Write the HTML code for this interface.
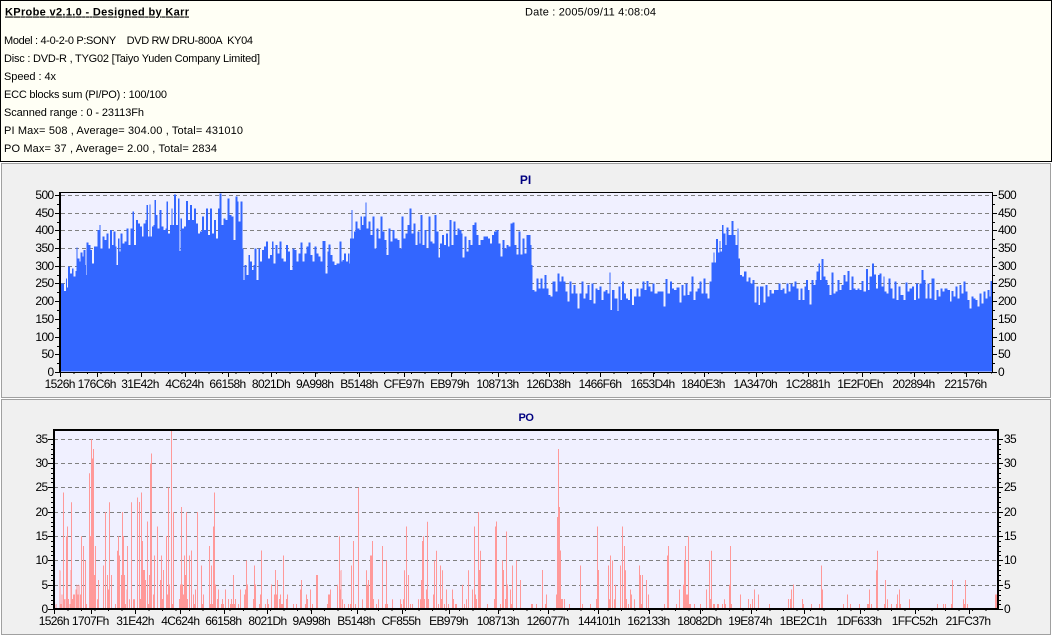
<!DOCTYPE html>
<html><head><meta charset="utf-8"><title>KProbe</title>
<style>
html,body{margin:0;padding:0;background:#fff;width:1052px;height:636px;overflow:hidden}
svg{display:block;font-family:"Liberation Sans",Arial,sans-serif}
text{white-space:pre;fill:#000}
.i{font-size:11px;fill:#000}
.a text{font-size:12px;letter-spacing:-.65px;text-anchor:middle}
.l text{font-size:12px;letter-spacing:-.65px;text-anchor:end}
.r text{font-size:12px;letter-spacing:-.65px;text-anchor:start}
.po path{fill:none;stroke:#ff9999;stroke-width:3}
.pi path{fill:#3366ff;shape-rendering:crispEdges}
.g{stroke:#808080;stroke-width:1;stroke-dasharray:4 3;fill:none;shape-rendering:crispEdges}
.k{stroke:#000;stroke-width:1;fill:none;shape-rendering:crispEdges}
</style></head><body>
<svg xmlns="http://www.w3.org/2000/svg" width="1052" height="636" viewBox="0 0 1052 636">
<defs><filter id="t" x="0" y="0" width="1" height="1" filterUnits="objectBoundingBox" color-interpolation-filters="sRGB"><feComponentTransfer><feFuncA type="discrete" tableValues="0 1"/></feComponentTransfer></filter></defs>
<rect x="0" y="0" width="1052" height="636" fill="#fff"/>
<!-- info -->
<rect x=".5" y=".5" width="1051" height="161" fill="#fffff5" stroke="#000" shape-rendering="crispEdges"/>
<text class="i" x="5" y="15.5" font-weight="bold" text-decoration="underline" textLength="184" lengthAdjust="spacing">KProbe v2.1.0 - Designed by Karr</text>
<text class="i" x="525" y="15.5" textLength="131" lengthAdjust="spacing">Date : 2005/09/11 4:08:04</text>
<text class="i" x="4" y="44" textLength="249" lengthAdjust="spacing">Model : 4-0-2-0 P:SONY    DVD RW DRU-800A  KY04</text>
<text class="i" x="4" y="62" textLength="256" lengthAdjust="spacing">Disc : DVD-R , TYG02 [Taiyo Yuden Company Limited]</text>
<text class="i" x="4" y="80" textLength="52" lengthAdjust="spacing">Speed : 4x</text>
<text class="i" x="4" y="98" textLength="163" lengthAdjust="spacing">ECC blocks sum (PI/PO) : 100/100</text>
<text class="i" x="4" y="116" textLength="140" lengthAdjust="spacing">Scanned range : 0 - 23113Fh</text>
<text class="i" x="4" y="134" textLength="239" lengthAdjust="spacing">PI Max= 508 , Average= 304.00 , Total= 431010</text>
<text class="i" x="4" y="152" textLength="213" lengthAdjust="spacing">PO Max= 37 , Average= 2.00 , Total= 2834</text>

<!-- panels -->
<rect x="1.5" y="163.5" width="1049" height="234" fill="#f0f0f0" stroke="#a0a0a0" shape-rendering="crispEdges"/>
<rect x="1.5" y="399.5" width="1049" height="235" fill="#f0f0f0" stroke="#a0a0a0" shape-rendering="crispEdges"/>

<!-- PI plot -->
<text x="525.5" y="184" font-size="12" font-weight="bold" text-anchor="middle" style="fill:#000080">PI</text>
<rect x="60" y="192" width="932" height="180" fill="#f0f0ff"/>
<path class="g" d="M61 195.5H992M61 213.5H992M61 230.5H992M61 248.5H992M61 266.5H992M61 283.5H992"/>
<g class="pi">
<path transform="translate(0 165) scale(.33333)" d="M183 620V355H192V378H198V340H201V368H204V304H210V325H216V310H220V335H226V318H229V248H232V280H238V290H241V262H247V275H250V255H256V300H258V330H260V232H266V240H272V255H276V295H282V245H288V245H292V195H298V180H302V250H308V215H314V225H320V205H326V250H330V195H336V240H340V200H346V245H350V300H354V220H358V260H362V205H368V235H374V230H380V190H386V240H392V190H398V140H402V240H408V165H414V175H420V185H426V215H430V175H436V165H440V120H444V215H448V118H452V215H456V185H460V180H464V105H468V150H472V190H478V135H484V185H490V195H496V190H500V110H504V205H510V180H514V130H518V180H522V88H528V180H534V100H538V258H542V160H546V190H552V185H558V108H564V165H570V120H576V165H582V130H588V175H594V205H600V200H606V155H612V195H618V130H624V210H630V130H636V205H642V165H648V220H654V130H658V85H664V180H670V160H676V165H682V100H688V150H694V155H700V225H706V95H712V110H716V170H722V110H728V250H730V345H734V300H740V330H745V270H750V290H756V315H760V300H764V250H770V345H775V250H780V290H786V255H792V245H798V230H804V280H810V270H816V230H820V295H826V240H832V265H838V230H844V280H850V290H858V240H864V260H870V315H878V250H884V255H890V290H896V265H902V232H908V290H914V265H920V245H926V232H932V270H938V290H944V245H950V265H956V275H962V290H968V228H976V325H982V260H986V238H992V270H998V290H1004V300H1010V295H1018V230H1024V620Z"/>
<path transform="translate(340 165) scale(.33333)" d="M0 620V290H8V285H12V265H18V290H24V265H28V295H30V220H34V135H38V220H42V200H46V170H52V190H58V195H62V155H66V180H70V155H76V112H80V190H86V170H92V210H98V155H104V250H110V190H116V220H122V155H128V200H134V225H140V270H146V190H152V230H158V195H164V220H172V225H178V250H184V155H190V220H196V205H202V180H208V130H214V205H220V175H226V240H232V200H238V235H242V150H248V240H254V195H260V250H266V155H272V230H278V235H284V150H290V200H296V278H300V235H306V210H312V240H318V205H324V245H328V165H334V240H340V170H346V210H352V190H358V195H364V205H368V278H374V215H380V260H386V225H392V240H398V180H404V172H410V210H416V240H422V225H430V215H438V215H444V220H450V235H456V210H462V200H470V195H476V235H482V275H488V225H494V250H500V240H506V245H512V175H518V172H524V240H530V268H536V200H542V268H548V220H554V265H560V210H566V210H572V240H575V300H578V375H584V380H590V340H596V370H602V340H608V370H614V330H620V370H626V390H632V395H638V350H646V380H652V325H658V350H664V335H670V350H676V380H682V410H688V350H694V385H700V360H706V385H712V430H718V385H724V350H730V400H736V385H742V360H748V405H754V355H760V415H766V370H772V375H778V365H784V405H790V380H796V375H802V385H808V620Z"/>
<path transform="translate(600 165) scale(.33333)" d="M28 620V322H32V435H36V375H44V400H52V438H56V365H62V405H66V350H72V385H78V400H84V405H90V372H96V420H102V395H110V370H116V395H122V370H128V350H134V375H140V348H146V365H152V380H158V355H164V385H172V380H180V380H190V425H196V342H202V385H210V350H216V370H222V375H230V368H238V412H244V360H250V392H256V355H262V390H268V380H274V335H280V405H286V380H292V370H298V350H304V385H310V340H316V385H322V400H328V350H334V292H340V262H344V292H348V222H354V262H358V228H362V260H366V180H370V205H376V240H380V187H386V210H394V168H400V210H406V240H412V190H416V280H420V330H426V335H432V320H440V350H446V338H452V355H458V345H464V412H470V365H476V420H480V365H486V365H490V412H496V360H502V395H508V375H514V385H522V375H530V375H536V355H542V375H548V370H554V385H560V355H566V380H572V355H578V365H584V350H590V370H596V405H602V370H608V405H614V365H618V345H624V375H628V418H634V345H640V360H646V345H650V320H656V295H660V345H664V282H670V335H676V345H682V360H688V390H694V322H700V385H706V380H712V345H718V375H724V360H730V330H736V350H742V318H748V375H754V335H760V370H766V375H772V370H778V375H784V348H790V380H798V312H804V375H808V620Z"/>
<path transform="translate(850 165) scale(.33333)" d="M58 620V335H66V295H72V328H78V370H84V330H88V325H94V365H100V335H104V380H110V385H116V340H122V370H128V400H134V350H140V405H146V365H152V390H160V405H166V352H172V380H178V370H186V365H192V405H198V355H204V400H208V355H214V315H220V345H226V400H232V355H238V400H244V340H250V340H254V405H260V375H266V395H272V370H278V380H284V370H292V375H300V410H304V378H310V395H316V365H322V400H328V360H334V385H340V350H346V380H352V405H358V430H364V395H370V400H376V405H382V425H388V385H394V415H400V380H406V400H412V375H418V395H422V348H427V620Z"/>
</g>
<path d="M60.5 192.5H992.5M59.5 192V373M60.5 192V373M992.5 192V373M60 372.5H993" class="k"/>
<!-- PI ticks -->
<path class="k" d="M60.5 373V377M97.5 373V377M141.5 373V377M185.5 373V377M228.5 373V377M271.5 373V377M315.5 373V377M359.5 373V377M404.5 373V377M451.5 373V377M498.5 373V377M549.5 373V377M600.5 373V377M653.5 373V377M704.5 373V377M756.5 373V377M808.5 373V377M862.5 373V377M914.5 373V377M966.5 373V377"/>
<path d="M60 373.5H992" stroke="#000" stroke-dasharray="1 12.5" fill="none" shape-rendering="crispEdges"/>
<path class="k" d="M55 195.5H59M55 213.5H59M55 230.5H59M55 248.5H59M55 266.5H59M55 283.5H59M55 301.5H59M55 319.5H59M55 337.5H59M55 354.5H59M55 372.5H59M57 204.5H59M57 222.5H59M57 239.5H59M57 257.5H59M57 275.5H59M57 292.5H59M57 310.5H59M57 328.5H59M57 346.5H59M57 363.5H59"/>
<path class="k" d="M993 195.5H997M993 213.5H997M993 230.5H997M993 248.5H997M993 266.5H997M993 283.5H997M993 301.5H997M993 319.5H997M993 337.5H997M993 354.5H997M993 372.5H997M993 204.5H995M993 222.5H995M993 239.5H995M993 257.5H995M993 275.5H995M993 292.5H995M993 310.5H995M993 328.5H995M993 346.5H995M993 363.5H995"/>
<g class="l">
<text x="53.5" y="199">500</text><text x="53.5" y="217">450</text><text x="53.5" y="234">400</text><text x="53.5" y="252">350</text><text x="53.5" y="270">300</text><text x="53.5" y="287">250</text><text x="53.5" y="305">200</text><text x="53.5" y="323">150</text><text x="53.5" y="341">100</text><text x="53.5" y="358">50</text><text x="53.5" y="376">0</text>
</g>
<g class="r">
<text x="998" y="199">500</text><text x="998" y="217">450</text><text x="998" y="234">400</text><text x="998" y="252">350</text><text x="998" y="270">300</text><text x="998" y="287">250</text><text x="998" y="305">200</text><text x="998" y="323">150</text><text x="998" y="341">100</text><text x="998" y="358">50</text><text x="998" y="376">0</text>
</g>
<g class="a">
<text x="59.7" y="388">1526h</text><text x="96.7" y="388">176C6h</text><text x="140" y="388">31E42h</text><text x="184.5" y="388">4C624h</text><text x="227.5" y="388">66158h</text><text x="271" y="388">8021Dh</text><text x="314.7" y="388">9A998h</text><text x="359" y="388">B5148h</text><text x="403.7" y="388">CFE97h</text><text x="449.5" y="388">EB979h</text><text x="497.5" y="388">108713h</text><text x="548.3" y="388">126D38h</text><text x="600" y="388">1466F6h</text><text x="652.5" y="388">1653D4h</text><text x="703" y="388">1840E3h</text><text x="755.3" y="388">1A3470h</text><text x="807.7" y="388">1C2881h</text><text x="860" y="388">1E2F0Eh</text><text x="913.5" y="388">202894h</text><text x="965.5" y="388">221576h</text>
</g>

<!-- PO plot -->
<text x="526" y="421" font-size="11" font-weight="bold" text-anchor="middle" style="fill:#000080;letter-spacing:-.5px">PO</text>
<rect x="54" y="430" width="945" height="179" fill="#f0f0ff"/>
<path class="g" d="M54 439.5H998M54 463.5H998M54 487.5H998M54 512.5H998M54 536.5H998M54 560.5H998M54 585.5H998"/>
<g class="po" filter="url(#t)">
<rect x="54" y="430" width="945" height="179" fill="#000" fill-opacity="0"/>
<path transform="translate(.17 609) scale(.33333 -4.85)" d="M168 0V1M179 0V8M182 0V1M185 0V3M190 0V24M193 0V2M197 0V2M199 0V15M202 0V17M205 0V2M209 0V1M212 0V8M214 0V22M217 0V2M220 0V3M223 0V3M227 0V4M230 0V5M233 0V3M236 0V5M241 0V3M244 0V15M250 0V13M256 0V10M259 0V1M268 0V28M271 0V15M274 0V35M277 0V31M280 0V33M283 0V7M286 0V13M292 0V2M295 0V6M310 0V9M316 0V20M322 0V7M325 0V4M328 0V22M334 0V7M346 0V1M352 0V12M355 0V15M358 0V11M364 0V7M367 0V20M370 0V15M373 0V7M376 0V1M380 0V4M382 0V13M388 0V2M394 0V22M400 0V2M403 0V2M412 0V23M418 0V22M421 0V2M424 0V24M427 0V14M430 0V8M433 0V8M436 0V6M442 0V18M445 0V1M448 0V7M451 0V30M454 0V32M460 0V3M463 0V11M472 0V17M481 0V6M484 0V11M487 0V2M490 0V8M499 0V15M502 0V3M505 0V25M508 0V5M514 0V37M517 0V1M520 0V20M538 0V2M541 0V5M544 0V21M547 0V5M550 0V3M553 0V11M556 0V7M559 0V20M562 0V2M568 0V11M574 0V12M580 0V3M583 0V1M586 0V4M592 0V20M604 0V9M607 0V1M610 0V3M628 0V13M631 0V1M634 0V9M637 0V1M640 0V17M643 0V24M646 0V5M652 0V2M655 0V4M664 0V1M667 0V2M670 0V1M676 0V4M685 0V2M691 0V1M694 0V2M697 0V1M700 0V7M703 0V1M706 0V2M715 0V1M721 0V4M733 0V3M736 0V4M739 0V10M742 0V5M760 0V2M763 0V9M766 0V5M778 0V1M781 0V3M784 0V12M796 0V1M802 0V2M805 0V1M814 0V5M823 0V3M826 0V8M829 0V3M832 0V6M838 0V2M841 0V3M844 0V1M847 0V1M850 0V11M859 0V2M862 0V3M880 0V1M889 0V1M901 0V4M904 0V6M916 0V1M919 0V3M922 0V2M931 0V4M937 0V1M949 0V7M952 0V7M982 0V1M985 0V3M988 0V3M991 0V4M1012 0V5M1018 0V15"/>
<path transform="translate(340.17 609) scale(.33333 -4.85)" d="M0 0V4M3 0V8M7 0V2M13 0V1M25 0V1M31 0V1M34 0V9M40 0V14M46 0V1M55 0V25M67 0V2M79 0V8M82 0V5M85 0V6M91 0V11M94 0V11M97 0V14M100 0V2M109 0V1M115 0V2M127 0V13M136 0V1M139 0V10M142 0V1M157 0V2M181 0V2M184 0V1M190 0V2M193 0V8M199 0V17M205 0V7M211 0V1M217 0V1M235 0V2M241 0V2M244 0V6M247 0V14M250 0V15M253 0V2M259 0V4M262 0V18M265 0V2M280 0V3M283 0V10M289 0V12M295 0V1M301 0V9M304 0V2M307 0V8M313 0V1M319 0V4M325 0V1M337 0V4M340 0V2M346 0V1M349 0V1M367 0V5M373 0V1M379 0V2M385 0V8M397 0V4M403 0V17M406 0V3M409 0V2M415 0V20M418 0V8M421 0V12M442 0V1M463 0V2M466 0V17M469 0V18M481 0V1M487 0V10M490 0V8M496 0V2M499 0V16M502 0V5M511 0V4M514 0V1M517 0V9M529 0V10M541 0V6M574 0V1M577 0V1M589 0V1M607 0V8M616 0V1M619 0V3M649 0V3M652 0V19M655 0V33M658 0V21M661 0V12M664 0V2M667 0V2M673 0V2M688 0V1M721 0V9M727 0V1M751 0V1M769 0V2M772 0V17M775 0V8"/>
<path transform="translate(600.17 609) scale(.33333 -4.85)" d="M25 0V9M28 0V2M31 0V11M37 0V10M43 0V2M46 0V5M61 0V9M67 0V17M73 0V13M76 0V8M79 0V2M85 0V1M91 0V4M94 0V3M103 0V2M118 0V9M121 0V7M124 0V1M127 0V7M139 0V6M145 0V3M193 0V1M202 0V11M205 0V13M229 0V1M238 0V4M250 0V5M253 0V10M256 0V13M259 0V3M262 0V3M265 0V15M268 0V1M271 0V1M283 0V1M301 0V1M319 0V4M328 0V10M331 0V2M334 0V12M340 0V1M343 0V1M352 0V1M355 0V1M367 0V1M373 0V2M376 0V1M388 0V5M391 0V13M394 0V1M421 0V3M445 0V2M451 0V1M457 0V2M463 0V4M475 0V3M508 0V1M565 0V2M571 0V2M574 0V4M580 0V5M607 0V2M610 0V1M634 0V1M658 0V1M664 0V9M667 0V4M730 0V1M742 0V3"/>
<path transform="translate(850.17 609) scale(.33333 -4.85)" d="M1 0V1M28 0V1M52 0V1M55 0V1M58 0V4M64 0V1M79 0V8M82 0V12M103 0V1M106 0V6M112 0V2M124 0V1M139 0V1M142 0V3M148 0V4M151 0V1M178 0V2M262 0V1M280 0V1M286 0V1M304 0V1M307 0V6M340 0V2M343 0V1M346 0V6M352 0V1M436 0V3M439 0V3"/>
</g>
<path class="k" d="M53 429.5H999M53 430.5H999M53.5 429V610M54.5 429V610M997.5 429V610M998.5 429V610M53 608.5H999M53 609.5H999"/>
<path class="k" d="M54.5 610V614M91.5 610V614M135.5 610V614M180.5 610V614M224.5 610V614M267.5 610V614M311.5 610V614M357.5 610V614M402.5 610V614M449.5 610V614M498.5 610V614M548.5 610V614M598.5 610V614M649.5 610V614M700.5 610V614M751.5 610V614M804.5 610V614M860.5 610V614M915.5 610V614M969.5 610V614"/>
<path d="M54 610.5H998" stroke="#000" stroke-dasharray="1 12.5" fill="none" shape-rendering="crispEdges"/>
<path class="k" d="M48 439.5H53M48 463.5H53M48 487.5H53M48 512.5H53M48 536.5H53M48 560.5H53M48 585.5H53M48 609.5H53M51 444.5H53M51 449.5H53M51 454.5H53M51 458.5H53M51 468.5H53M51 473.5H53M51 478.5H53M51 482.5H53M51 492.5H53M51 497.5H53M51 502.5H53M51 507.5H53M51 517.5H53M51 522.5H53M51 526.5H53M51 531.5H53M51 541.5H53M51 546.5H53M51 551.5H53M51 555.5H53M51 565.5H53M51 570.5H53M51 575.5H53M51 580.5H53M51 590.5H53M51 595.5H53M51 600.5H53M51 604.5H53"/>
<path class="k" d="M999 439.5H1003M999 463.5H1003M999 487.5H1003M999 512.5H1003M999 536.5H1003M999 560.5H1003M999 585.5H1003M999 609.5H1003M999 444.5H1001M999 449.5H1001M999 454.5H1001M999 458.5H1001M999 468.5H1001M999 473.5H1001M999 478.5H1001M999 482.5H1001M999 492.5H1001M999 497.5H1001M999 502.5H1001M999 507.5H1001M999 517.5H1001M999 522.5H1001M999 526.5H1001M999 531.5H1001M999 541.5H1001M999 546.5H1001M999 551.5H1001M999 555.5H1001M999 565.5H1001M999 570.5H1001M999 575.5H1001M999 580.5H1001M999 590.5H1001M999 595.5H1001M999 600.5H1001M999 604.5H1001"/>
<g class="l">
<text x="47.5" y="443">35</text><text x="47.5" y="467">30</text><text x="47.5" y="491">25</text><text x="47.5" y="516">20</text><text x="47.5" y="540">15</text><text x="47.5" y="564">10</text><text x="47.5" y="589">5</text><text x="47.5" y="613">0</text>
</g>
<g class="r">
<text x="1004" y="443">35</text><text x="1004" y="467">30</text><text x="1004" y="491">25</text><text x="1004" y="516">20</text><text x="1004" y="540">15</text><text x="1004" y="564">10</text><text x="1004" y="589">5</text><text x="1004" y="613">0</text>
</g>
<g class="a">
<text x="53.8" y="625">1526h</text><text x="90.3" y="625">1707Fh</text><text x="135" y="625">31E42h</text><text x="180.3" y="625">4C624h</text><text x="223.3" y="625">66158h</text><text x="267.5" y="625">8021Dh</text><text x="311.3" y="625">9A998h</text><text x="356" y="625">B5148h</text><text x="401" y="625">CF855h</text><text x="448.5" y="625">EB979h</text><text x="497.8" y="625">108713h</text><text x="547.7" y="625">126077h</text><text x="599" y="625">144101h</text><text x="648.5" y="625">162133h</text><text x="699.5" y="625">18082Dh</text><text x="750" y="625">19E874h</text><text x="803" y="625">1BE2C1h</text><text x="859" y="625">1DF633h</text><text x="914.5" y="625">1FFC52h</text><text x="968" y="625">21FC37h</text>
</g>
</svg>
</body></html>
